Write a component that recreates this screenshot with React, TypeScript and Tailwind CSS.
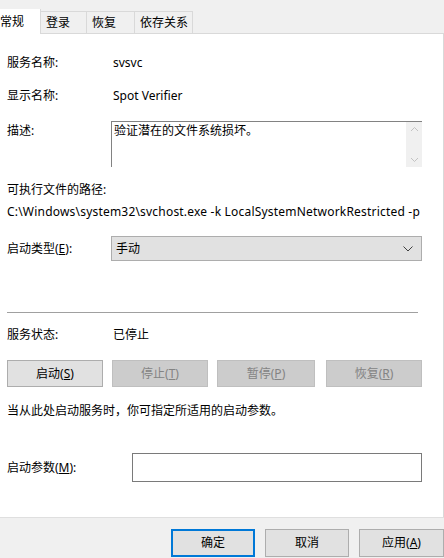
const font = { fontFamily: '"Segoe UI", "Noto Sans", "Noto Sans CJK SC", sans-serif' };

const Tab = ({ label, active, className }: { label: string; active?: boolean; className?: string }) => (
    <div
        className={`${active
            ? 'h-[25px] -mb-px bg-white border-r border-[#d9d9d9] flex items-center text-black'
            : 'h-[22px] bg-[#f0f0f0] border-r border-t border-[#d9d9d9] pl-[5px] flex items-center text-black'
            } ${className ?? ''}`}
    >
        {label}
    </div>
);

const Btn = ({ label, disabled, className }: { label: React.ReactNode; disabled?: boolean; className?: string }) => (
    <div
        className={`h-[27px] flex items-center justify-center border ${disabled
            ? 'bg-[#cccccc] border-[#bfbfbf] text-[#838383]'
            : 'bg-[#e1e1e1] border-[#adadad] text-black'
            } ${className ?? ''}`}
    >
        {label}
    </div>
);

export default function App() {
    return (
        <div className="w-[444px] h-[558px] bg-[#f0f0f0] flex flex-col text-[12px] leading-[16px] text-black overflow-hidden" style={font}>
            {/* tabs */}
            <div className="h-[34px] flex items-end border-b border-[#d9d9d9] shrink-0">
                <Tab label="常规" active className="w-[41px]" />
                <Tab label="登录" className="w-[46px]" />
                <Tab label="恢复" className="w-[48px]" />
                <Tab label="依存关系" className="w-[58px]" />
            </div>

            {/* content */}
            <div className="flex-1 bg-white border-r border-[#d9d9d9] pl-[7px] pr-[21px] flex flex-col">
                <div className="mt-[18px] h-[22px] flex items-center">
                    <div className="w-[106px]">服务名称:</div>
                    <div>svsvc</div>
                </div>
                <div className="mt-[11px] h-[22px] flex items-center">
                    <div className="w-[106px]">显示名称:</div>
                    <div>Spot Verifier</div>
                </div>
                <div className="mt-[14px] flex">
                    <div className="w-[104px] pt-[2px]">描述:</div>
                    <div className="flex-1 h-[46px] border border-[#828282] border-b-0 border-r-0 flex">
                        <div className="flex-1 px-[2px] pt-[1px]">验证潜在的文件系统损坏。</div>
                        <div className="w-[16px] bg-[#f0f0f0] flex flex-col justify-between items-center py-[4px]">
                            <svg width="9" height="6" viewBox="0 0 9 6"><path d="M1 5 L4.5 1.5 L8 5" fill="none" stroke="#c2c2c2" strokeWidth="1" /></svg>
                            <svg width="9" height="6" viewBox="0 0 9 6"><path d="M1 1 L4.5 4.5 L8 1" fill="none" stroke="#c2c2c2" strokeWidth="1" /></svg>
                        </div>
                    </div>
                </div>
                <div className="mt-[15px]">可执行文件的路径:</div>
                <div className="mt-[6px] whitespace-nowrap tracking-[0.2px]">C:\Windows\system32\svchost.exe -k LocalSystemNetworkRestricted -p</div>
                <div className="mt-[16px] flex items-center">
                    <div className="w-[104px]">
                        启动类型(<span className="underline">E</span>):
                    </div>
                    <div className="flex-1 h-[25px] bg-[#e1e1e1] border border-[#adadad] flex items-center justify-between pl-[4px] pr-[8px]">
                        <span>手动</span>
                        <svg width="10" height="6" viewBox="0 0 10 6"><path d="M0.5 0.5 L5 5 L9.5 0.5" fill="none" stroke="#404040" strokeWidth="1" /></svg>
                    </div>
                </div>
                <div className="mt-[51px] h-px bg-[#a0a0a0] mr-[4px]" />
                <div className="mt-[14px] flex items-center">
                    <div className="w-[106px]">服务状态:</div>
                    <div>已停止</div>
                </div>
                <div className="mt-[17px] flex gap-[9px]">
                    <Btn label={<>启动(<span className="underline">S</span>)</>} className="w-[96px]" />
                    <Btn label={<>停止(<span className="underline">T</span>)</>} disabled className="w-[96px]" />
                    <Btn label={<>暂停(<span className="underline">P</span>)</>} disabled className="w-[98px]" />
                    <Btn label={<>恢复(<span className="underline">R</span>)</>} disabled className="w-[96px] ml-[2px]" />
                </div>
                <div className="mt-[16px]">当从此处启动服务时，你可指定所适用的启动参数。</div>
                <div className="mt-[34px] flex items-center">
                    <div className="w-[125px]">
                        启动参数(<span className="underline">M</span>):
                    </div>
                    <div className="flex-1 h-[29px] border border-[#7a7a7a] bg-white" />
                </div>
            </div>

            {/* footer */}
            <div className="h-[41px] shrink-0 border-t border-[#dfdfdf] flex items-start pt-[11px] pl-[171px] gap-[10px]">
                <div className="w-[85px] h-[28px] bg-[#e1e1e1] border-2 border-[#0078d7] flex items-center justify-center">确定</div>
                <div className="w-[85px] h-[28px] bg-[#e1e1e1] border border-[#adadad] flex items-center justify-center">取消</div>
                <div className="w-[86px] h-[28px] bg-[#e1e1e1] border border-[#adadad] flex items-center justify-center">
                    应用(<span className="underline">A</span>)
                </div>
            </div>
        </div>
    );
}
